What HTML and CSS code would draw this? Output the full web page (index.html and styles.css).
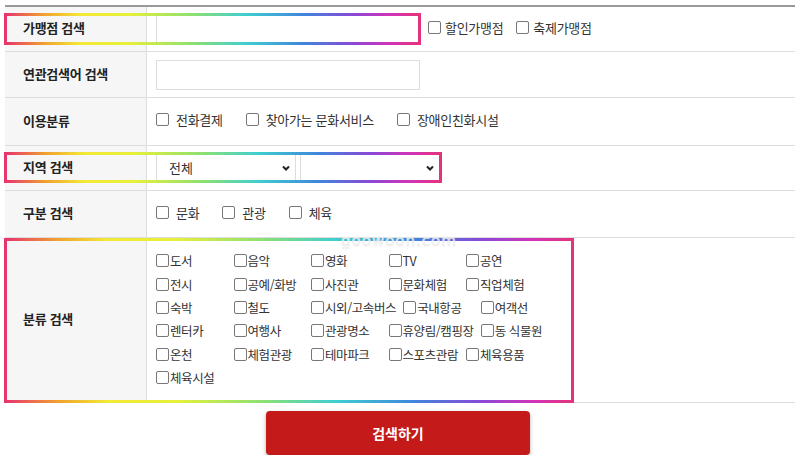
FILE: index.html
```html
<!DOCTYPE html>
<html lang="ko">
<head>
  <meta charset="UTF-8">
  <title>가맹점 검색</title>
  <link rel="stylesheet" href="styles.css">
</head>
<body>
  <div class="page">
    <div class="search-table">
      <!-- 가맹점 검색 -->
      <div class="row row-name">
        <div class="label">가맹점 검색</div>
        <div class="field">
          <input type="text" class="text-input">
          <label class="check check-tight"><input type="checkbox"><span>할인가맹점</span></label>
          <label class="check check-tight"><input type="checkbox"><span>축제가맹점</span></label>
        </div>
        <div class="hl hl-name"></div>
      </div>
      <!-- 연관검색어 -->
      <div class="row">
        <div class="label">연관검색어 검색</div>
        <div class="field">
          <input type="text" class="text-input">
        </div>
      </div>
      <!-- 이용분류 -->
      <div class="row row-use">
        <div class="label">이용분류</div>
        <div class="field">
          <label class="check"><input type="checkbox"><span>전화결제</span></label>
          <label class="check"><input type="checkbox"><span>찾아가는 문화서비스</span></label>
          <label class="check"><input type="checkbox"><span>장애인친화시설</span></label>
        </div>
      </div>
      <!-- 지역 검색 -->
      <div class="row row-area">
        <div class="label">지역 검색</div>
        <div class="field">
          <span class="select-wrap">
            <select><option>전체</option></select>
            <svg class="chev" width="10" height="7" viewBox="0 0 10 7"><path d="M2 1.5 L5 4.5 L8 1.5" fill="none" stroke="#222" stroke-width="2"/></svg>
          </span>
          <span class="select-wrap">
            <select><option></option></select>
            <svg class="chev" width="10" height="7" viewBox="0 0 10 7"><path d="M2 1.5 L5 4.5 L8 1.5" fill="none" stroke="#222" stroke-width="2"/></svg>
          </span>
        </div>
        <div class="hl hl-area"></div>
      </div>
      <!-- 구분 검색 -->
      <div class="row row-type">
        <div class="label">구분 검색</div>
        <div class="field">
          <label class="check"><input type="checkbox"><span>문화</span></label>
          <label class="check"><input type="checkbox"><span>관광</span></label>
          <label class="check"><input type="checkbox"><span>체육</span></label>
        </div>
      </div>
      <!-- 분류 검색 -->
      <div class="row row-cat">
        <div class="label">분류 검색</div>
        <div class="field">
          <div class="cat-list" id="catList"></div>
        </div>
        <div class="hl hl-cat"></div>
      </div>
      <div class="watermark">goowoon.com</div>
    </div>
    <div class="btn-area">
      <button class="search-btn">검색하기</button>
    </div>
  </div>
  <script>
    const cats = ['도서', '음악', '영화', 'TV', '공연',
      '전시', '공예/화방', '사진관', '문화체험', '직업체험',
      '숙박', '철도', '시외/고속버스', '국내항공', '여객선',
      '렌터카', '여행사', '관광명소', '휴양림/캠핑장', '동 식물원',
      '온천', '체험관광', '테마파크', '스포츠관람', '체육용품',
      '체육시설'];
    const catList = document.getElementById('catList');
    cats.forEach(name => {
      const item = document.createElement('label');
      item.className = 'cat-item';
      item.innerHTML = '<input type="checkbox"><span>' + name + '</span>';
      catList.appendChild(item);
    });
  </script>
</body>
</html>
```

FILE: styles.css
```css
body {
  margin: 0;
  font-family: "Noto Sans CJK KR", "Noto Sans", sans-serif;
  color: #333;
  background: #fff;
}

.page {
  padding: 5px 5px 0;
}

.search-table {
  position: relative;
  border-top: 2px solid #999;
}

.row {
  position: relative;
  display: grid;
  grid-template-columns: 142px 1fr;
  height: 45px;
  border-bottom: 1px solid #ddd;
}

.row-name { height: 44px; }
.row-use { height: 47px; }
.row-area { height: 44px; }
.row-type { height: 46px; }
.row-cat { height: 164px; }

.label {
  display: flex;
  align-items: center;
  padding-left: 18px;
  padding-bottom: 3px;
  background: #f6f6f6;
  border-right: 1px solid #ddd;
  font-size: 13px;
  font-weight: 700;
  color: #222;
  letter-spacing: -0.3px;
}

.field {
  display: flex;
  align-items: center;
  padding: 0 9px;
  font-size: 13px;
  letter-spacing: -0.3px;
}

.text-input {
  width: 264px;
  height: 30px;
  box-sizing: border-box;
  border: 1px solid #ddd;
  margin: 0 8px 0 0;
  padding: 0 8px;
}

input[type="checkbox"] {
  appearance: none;
  -webkit-appearance: none;
  width: 13px;
  height: 13px;
  margin: 0;
  border: 1px solid #777;
  border-radius: 2px;
  background: #fff;
  flex: none;
}

.check {
  display: inline-flex;
  align-items: center;
  gap: 7px;
  margin-right: 23px;
  margin-bottom: 4px;
}

.check-tight {
  gap: 4px;
  margin-right: 13px;
}

.select-wrap {
  position: relative;
  display: inline-block;
  margin-right: 4px;
}

.select-wrap select {
  appearance: none;
  -webkit-appearance: none;
  width: 140px;
  height: 30px;
  border: 1px solid #ddd;
  border-radius: 0;
  background: #fff;
  padding: 0 12px 2px;
  font-family: inherit;
  font-size: 13px;
  color: #333;
  display: block;
}

.chev {
  position: absolute;
  right: 5px;
  top: 12px;
}

.row-cat .field {
  align-items: flex-start;
  padding: 11px 9px 11px;
}

.cat-list {
  display: flex;
  flex-wrap: wrap;
  width: 412px;
  font-size: 12.5px;
  letter-spacing: -0.4px;
}

.cat-item {
  display: inline-flex;
  align-items: center;
  min-width: 77.5px;
  height: 23.4px;
  padding-right: 7px;
  box-sizing: border-box;
  flex: none;
}

.cat-item input {
  margin-right: 1px;
}

/* rainbow highlight frames */
.hl {
  position: absolute;
  box-sizing: border-box;
  border: 3px solid;
  border-image: linear-gradient(to right, #e8346e 0%, #f0a02e 9%, #f3e936 18%, #e6f03a 30%, #8ee070 45%, #3fcfd0 58%, #3f86dc 72%, #8a48d8 84%, #d233b8 93%, #e4337c 100%) 1;
  pointer-events: none;
}

.hl-name {
  left: -1px;
  top: 6px;
  width: 417px;
  height: 32px;
}

.hl-area {
  left: -1px;
  top: 6px;
  width: 438px;
  height: 31px;
}

.hl-cat {
  left: -1px;
  top: 0;
  width: 570px;
  height: 165px;
}

.watermark {
  position: absolute;
  left: 336px;
  top: 225px;
  font-family: "DejaVu Sans", sans-serif;
  font-size: 15px;
  letter-spacing: 1px;
  color: rgba(255, 255, 255, 0.8);
  -webkit-text-stroke: 0.5px #e2e2e2;
  pointer-events: none;
}

.btn-area {
  display: flex;
  justify-content: center;
  padding-top: 8px;
}

.search-btn {
  width: 264px;
  height: 44px;
  border: none;
  border-radius: 4px;
  background: #c41a1a;
  color: #fff;
  font-family: inherit;
  font-size: 14px;
  font-weight: 700;
  box-shadow: 0 2px 4px rgba(0, 0, 0, 0.3);
  margin-right: 4px;
}
```
